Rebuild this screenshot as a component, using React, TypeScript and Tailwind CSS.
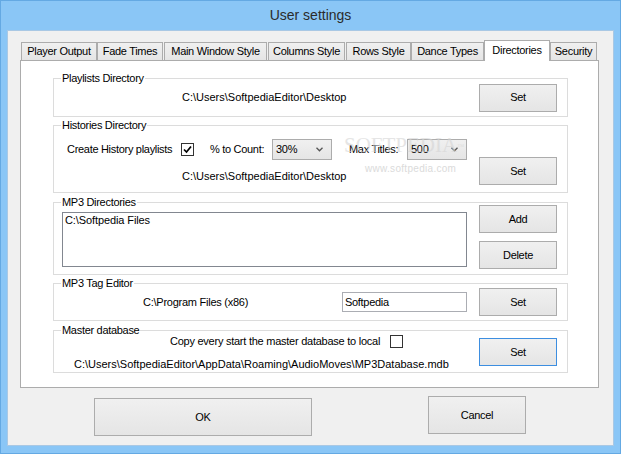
import type { ReactNode } from "react";

const TABS = [
  { label: "Player Output", cls: "w-[76px]" },
  { label: "Fade Times", cls: "w-[66px]" },
  { label: "Main Window Style", cls: "w-[103px] ml-px" },
  { label: "Columns Style", cls: "w-[77px] ml-px" },
  { label: "Rows Style", cls: "w-[65px] ml-px" },
  { label: "Dance Types", cls: "w-[73px]" },
  { label: "Directories", cls: "w-[66px]", active: true },
  { label: "Security", cls: "w-[47px]" },
];

function Btn({
  children,
  className = "",
  focused = false,
}: {
  children: ReactNode;
  className?: string;
  focused?: boolean;
}) {
  return (
    <div
      className={`flex items-center justify-center border bg-linear-to-b from-[#f0f0f0] to-[#e5e5e5] ${
        focused ? "border-[#3d8ee0]" : "border-[#acacac]"
      } ${className}`}
    >
      {children}
    </div>
  );
}

function Check({ checked = false }: { checked?: boolean }) {
  return (
    <div className="w-[13px] h-[13px] shrink-0 border border-[#333] bg-white flex items-center justify-center">
      {checked && (
        <svg width="11" height="11" viewBox="0 0 11 11">
          <path d="M2 5.5 L4.5 8 L9 2.5" fill="none" stroke="#000" strokeWidth="1.7" />
        </svg>
      )}
    </div>
  );
}

function Combo({ value }: { value: string }) {
  return (
    <div className="w-[60px] h-[21px] shrink-0 border border-[#acacac] bg-linear-to-b from-[#f0f0f0] to-[#e5e5e5] flex items-center justify-between pl-[3px] pr-[8px]">
      <span>{value}</span>
      <svg width="7" height="5" viewBox="0 0 7 5">
        <path d="M0.5 0.8 L3.5 3.8 L6.5 0.8" fill="none" stroke="#555" strokeWidth="1.3" />
      </svg>
    </div>
  );
}

function Group({ label, className, children }: { label: string; className: string; children: ReactNode }) {
  return (
    <div className={`relative w-[515px] border border-[#dcdcdc] ${className}`}>
      <span className="absolute left-[7px] -top-[7px] bg-white px-px leading-[13px] whitespace-nowrap">{label}</span>
      {children}
    </div>
  );
}

export default function App() {
  return (
    <div className="relative w-[621px] h-[454px] bg-[#8ac6f6] border border-[#64a9e3] px-[6px] font-['Liberation_Sans',Arial,sans-serif] text-[11px] tracking-[-0.3px] text-black">
      <div className="h-[29px] flex items-center justify-center text-[14px] tracking-normal text-[#2b2b2b]">User settings</div>

      <div className="w-[607px] h-[416px] border border-[#a9c8e4] bg-[#f0f0f0]">
        <div className="h-[29px] flex items-end pl-[13px]">
          {TABS.map((t) =>
            t.active ? (
              <div
                key={t.label}
                className={`relative z-10 -mb-px h-[21px] bg-white border border-b-0 border-[#acacac] flex items-center justify-center pb-[2px] whitespace-nowrap ${t.cls}`}
              >
                {t.label}
              </div>
            ) : (
              <div
                key={t.label}
                className={`h-[18px] bg-linear-to-b from-[#f0f0f0] to-[#e5e5e5] border border-b-0 border-[#acacac] flex items-center justify-center whitespace-nowrap ${t.cls}`}
              >
                {t.label}
              </div>
            )
          )}
        </div>

        <div className="ml-[12px] w-[579px] h-[328px] border border-[#acacac] bg-white pl-[32px] pt-[17px] flex flex-col">
          <Group label="Playlists Directory" className="h-[39px] flex items-center">
            <span className="pl-[128px] leading-[13px] tracking-normal">C:\Users\SoftpediaEditor\Desktop</span>
            <Btn className="ml-auto mr-[10px] w-[78px] h-[28px]">Set</Btn>
          </Group>

          <Group label="Histories Directory" className="mt-[8px] h-[68px] flex">
            <div className="flex-1 flex flex-col pt-[13px]">
              <div className="h-[21px] flex items-center pl-[13px] whitespace-nowrap">
                <span className="w-[114px] shrink-0">Create History playlists</span>
                <Check checked />
                <span className="ml-[16px] w-[62px] shrink-0">% to Count:</span>
                <Combo value="30%" />
                <span className="ml-[17px] w-[58px] shrink-0">Max Titles:</span>
                <Combo value="500" />
              </div>
              <div className="mt-[10px] pl-[128px] leading-[13px] tracking-normal">C:\Users\SoftpediaEditor\Desktop</div>
            </div>
            <div className="pt-[31px] pr-[10px]">
              <Btn className="w-[78px] h-[28px]">Set</Btn>
            </div>
          </Group>

          <Group label="MP3 Directories" className="mt-[9px] h-[73px] flex">
            <div className="flex-1 pl-[8px] pt-[9px]">
              <div className="w-[405px] h-[55px] border border-[#828790] bg-white px-[2px] pt-px leading-[13px] tracking-[-0.1px]">
                C:\Softpedia Files
              </div>
            </div>
            <div className="pt-[2px] pr-[10px] flex flex-col">
              <Btn className="w-[78px] h-[28px]">Add</Btn>
              <Btn className="mt-[8px] w-[78px] h-[28px]">Delete</Btn>
            </div>
          </Group>

          <Group label="MP3 Tag Editor" className="mt-[8px] h-[38px] flex items-center">
            <span className="w-[288px] shrink-0 pl-[89px] leading-[13px] tracking-[-0.25px]">C:\Program Files (x86)</span>
            <div className="w-[125px] h-[20px] border border-[#abadb3] bg-white pl-[2px] leading-[18px]">Softpedia</div>
            <Btn className="ml-auto mr-[10px] w-[78px] h-[28px]">Set</Btn>
          </Group>

          <Group label="Master database" className="mt-[9px] h-[43px] flex">
            <div className="flex-1 flex flex-col pt-[4px]">
              <div className="h-[13px] flex items-center pl-[116px]">
                <span className="w-[220px] shrink-0 whitespace-nowrap tracking-[-0.25px]">
                  Copy every start the master database to local
                </span>
                <Check />
              </div>
              <div className="mt-[10px] pl-[20px] leading-[13px] tracking-normal whitespace-nowrap">
                C:\Users\SoftpediaEditor\AppData\Roaming\AudioMoves\MP3Database.mdb
              </div>
            </div>
            <div className="pt-[7px] pr-[10px]">
              <Btn focused className="w-[78px] h-[28px]">Set</Btn>
            </div>
          </Group>
        </div>

        <div className="flex items-start pt-[8px] pl-[86px]">
          <Btn className="mt-[2px] w-[218px] h-[38px]">OK</Btn>
          <Btn className="ml-[116px] w-[98px] h-[38px]">Cancel</Btn>
        </div>
      </div>

      <span className="absolute left-[343px] top-[134px] font-['Liberation_Serif',serif] text-[21px] leading-[21px] tracking-normal text-[#d4d4d4] opacity-60">
        SOFTPEDIA<sup className="text-[7px]">™</sup>
      </span>
      <span className="absolute left-[364px] top-[163px] text-[10px] leading-[10px] tracking-[0.3px] text-[#cccccc] opacity-70">
        www.softpedia.com
      </span>
    </div>
  );
}
